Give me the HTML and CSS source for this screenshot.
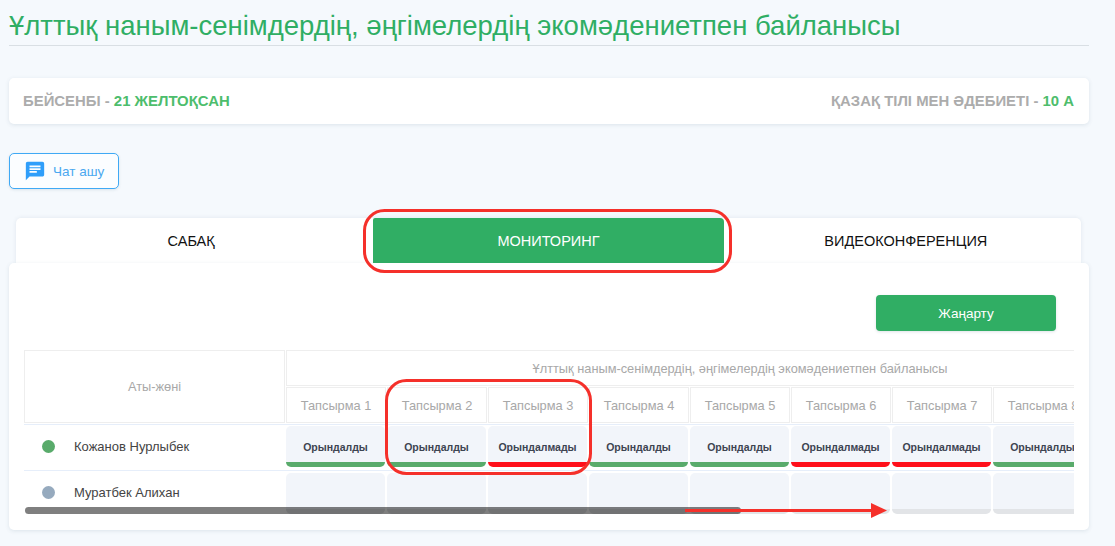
FILE: index.html
```html
<!DOCTYPE html>
<html lang="kk">
<head>
    <meta charset="UTF-8">
    <meta name="viewport" content="width=device-width, initial-scale=1.0">
    <title>Мониторинг</title>
    <link rel="stylesheet" href="styles.css">
</head>
<body>
    <div class="page">
        <h1 class="title">Ұлттық наным-сенімдердің, әңгімелердің экомәдениетпен байланысы</h1>

        <div class="info-card">
            <div class="info-text">БЕЙСЕНБІ - <span class="accent">21 ЖЕЛТОҚСАН</span></div>
            <div class="info-text">ҚАЗАҚ ТІЛІ МЕН ӘДЕБИЕТІ - <span class="accent">10 А</span></div>
        </div>

        <button class="chat-btn">
            <svg class="chat-icon" viewBox="0 0 24 24"><path d="M20 2H4c-1.1 0-1.99.9-1.99 2L2 22l4-4h14c1.1 0 2-.9 2-2V4c0-1.1-.9-2-2-2zM6 9h12v2H6V9zm8 5H6v-2h8v2zm4-6H6V6h12v2z"/></svg>
            Чат ашу
        </button>

        <!-- Табы -->
        <div class="tabs">
            <div class="tab">САБАҚ</div>
            <div class="tab active">МОНИТОРИНГ</div>
            <div class="tab">ВИДЕОКОНФЕРЕНЦИЯ</div>
        </div>

        <div class="panel">
            <div class="panel-top">
                <button class="refresh-btn">Жаңарту</button>
            </div>

            <div class="table-wrap">
                <div class="grid">
                    <div class="head name-head">Аты-жөні</div>
                    <div class="head group-head">Ұлттық наным-сенімдердің, әңгімелердің экомәдениетпен байланысы</div>

                    <div class="head task">Тапсырма 1</div>
                    <div class="head task">Тапсырма 2</div>
                    <div class="head task">Тапсырма 3</div>
                    <div class="head task">Тапсырма 4</div>
                    <div class="head task">Тапсырма 5</div>
                    <div class="head task">Тапсырма 6</div>
                    <div class="head task">Тапсырма 7</div>
                    <div class="head task">Тапсырма 8</div>
                    <div class="head task">Тапсырма 9</div>

                    <div class="student first"><span class="dot online"></span>Кожанов Нурлыбек</div>
                    <div class="cell first"><div class="status done">Орындалды</div></div>
                    <div class="cell first"><div class="status done">Орындалды</div></div>
                    <div class="cell first"><div class="status fail">Орындалмады</div></div>
                    <div class="cell first"><div class="status done">Орындалды</div></div>
                    <div class="cell first"><div class="status done">Орындалды</div></div>
                    <div class="cell first"><div class="status fail">Орындалмады</div></div>
                    <div class="cell first"><div class="status fail">Орындалмады</div></div>
                    <div class="cell first"><div class="status done">Орындалды</div></div>
                    <div class="cell first"><div class="status done">Орындалды</div></div>

                    <div class="student"><span class="dot offline"></span>Муратбек Алихан</div>
                    <div class="cell"><div class="status"></div></div>
                    <div class="cell"><div class="status"></div></div>
                    <div class="cell"><div class="status"></div></div>
                    <div class="cell"><div class="status"></div></div>
                    <div class="cell"><div class="status"></div></div>
                    <div class="cell"><div class="status"></div></div>
                    <div class="cell"><div class="status"></div></div>
                    <div class="cell"><div class="status"></div></div>
                    <div class="cell"><div class="status"></div></div>
                </div>
                <div class="scrollbar"></div>
            </div>
        </div>
    </div>

    <!-- Қызыл белгілер -->
    <svg class="marks" width="1115" height="546" viewBox="0 0 1115 546">
        <rect x="364.5" y="210.5" width="366" height="61" rx="20" />
        <rect x="386.5" y="380.5" width="204" height="93" rx="20" />
        <path d="M685 510.5H872" />
        <polygon points="871,503 887,510.5 871,518" />
    </svg>
</body>
</html>
```

FILE: styles.css
```css
/* Global */
html, body {
    margin: 0;
    padding: 0;
    height: 100%;
    overflow: hidden;
    background-color: #f5f9fd;
    font-family: 'Liberation Sans', Arial, sans-serif;
}

.page {
    padding: 0 26px 0 9px;
}

/* Title */
.title {
    margin: 0 0 32px;
    height: 45px;
    line-height: 51px;
    font-size: 27.5px;
    font-weight: normal;
    color: #2fae64;
    border-bottom: 1px solid #d9dfe4;
    white-space: nowrap;
}

/* Info card */
.info-card {
    display: flex;
    justify-content: space-between;
    align-items: center;
    height: 46px;
    padding: 0 15px 0 14px;
    background: #fff;
    border-radius: 5px;
    box-shadow: 0 1px 4px rgba(40, 70, 100, 0.12);
}

.info-text {
    font-size: 14.9px;
    font-weight: bold;
    color: #acacac;
}

.accent {
    color: #4dbd6c;
}

/* Chat button */
.chat-btn {
    display: flex;
    align-items: center;
    gap: 7px;
    width: 110px;
    height: 36px;
    margin: 29px 0;
    padding: 0 0 0 14px;
    background: #fbfdff;
    border: 1px solid #3fa9f5;
    border-radius: 5px;
    font-family: inherit;
    font-size: 13.5px;
    color: #4aa8f0;
    box-shadow: 0 1px 3px rgba(40, 70, 100, 0.12);
}

.chat-icon {
    width: 22px;
    height: 22px;
    fill: #2f9efa;
}

/* Tabs */
.tabs {
    display: flex;
    gap: 7px;
    height: 45px;
    margin: 0 8px 0 7px;
    background: #fff;
    border-radius: 5px 5px 0 0;
    box-shadow: 0 0 4px rgba(40, 70, 100, 0.1);
}

.tab {
    flex: 1;
    display: flex;
    justify-content: center;
    align-items: center;
    font-size: 14.5px;
    color: #111;
}

.tab.active {
    background: #30ae64;
    border-radius: 2px 4px 0 0;
    color: #fff;
}

/* Panel */
.panel {
    position: relative;
    height: 267px;
    padding: 32px 15px 0;
    box-sizing: border-box;
    background: #fff;
    border-radius: 5px;
    box-shadow: 0 1px 4px rgba(40, 70, 100, 0.12);
}

.panel-top {
    display: flex;
    justify-content: flex-end;
    margin: 0 18px 19px 0;
}

.refresh-btn {
    width: 180px;
    height: 36px;
    padding: 0;
    background: #30ae64;
    border: 0;
    border-radius: 4px;
    font-family: inherit;
    font-size: 13.5px;
    color: #fff;
    box-shadow: 0 1px 3px rgba(40, 70, 100, 0.15);
}

/* Table */
.table-wrap {
    position: relative;
    height: 164px;
    overflow: hidden;
}

.grid {
    display: grid;
    grid-template-columns: 262px repeat(9, 101px);
    grid-template-rows: 37px 37px 47px 47px;
    width: 1171px;
}

.head {
    display: flex;
    justify-content: center;
    align-items: center;
    box-sizing: border-box;
    margin: 0 1px 1px 0;
    border: 1px solid #eeeeee;
    font-size: 12.8px;
    color: #a8a8a8;
}

.name-head {
    grid-row: 1 / 3;
}

.group-head {
    grid-column: 2 / 11;
}

.student, .cell {
    box-sizing: border-box;
    border-bottom: 1px solid #e6eefa;
}

.student {
    display: flex;
    align-items: center;
    padding: 0 0 4px 18px;
    font-size: 13px;
    color: #444;
}

.student.first {
    padding-bottom: 2px;
}

.first {
    border-top: 1px solid #e6eefa;
}

.dot {
    width: 13px;
    height: 13px;
    margin-right: 19px;
    border-radius: 50%;
}

.online {
    background: #59ab6b;
}

.offline {
    background: #96aabe;
}

.cell {
    padding: 2px 2px 0 0;
    border-bottom-color: transparent;
}

.cell.first {
    padding-top: 1px;
    border-bottom-color: #e6eefa;
}

.status {
    display: flex;
    justify-content: center;
    align-items: center;
    box-sizing: border-box;
    height: 41px;
    padding-top: 6px;
    background: #f2f5fa;
    border-bottom: 5px solid #e2e4e7;
    border-radius: 5px;
    font-size: 10.5px;
    font-weight: bold;
    color: #3d4451;
    white-space: nowrap;
}

.status.done {
    border-bottom-color: #59ab6b;
}

.status.fail {
    border-bottom-color: #ff0f1a;
}

.scrollbar {
    position: absolute;
    left: 1px;
    bottom: 0;
    width: 716px;
    height: 7px;
    background: rgba(0, 0, 0, 0.5);
    border-radius: 4px;
}

/* Annotation overlay */
.marks {
    position: absolute;
    top: 0;
    left: 0;
    pointer-events: none;
}

.marks rect, .marks path {
    fill: none;
    stroke: #f5302a;
    stroke-width: 3;
}

.marks polygon {
    fill: #f5302a;
}
```
